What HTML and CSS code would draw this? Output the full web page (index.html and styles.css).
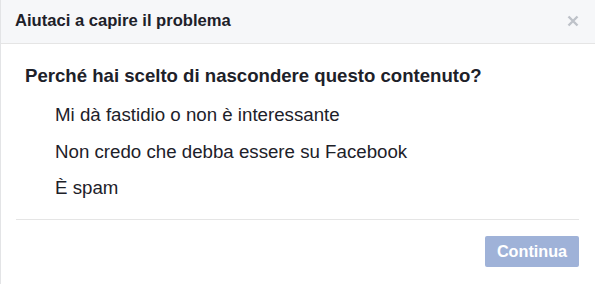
FILE: index.html
```html
<!DOCTYPE html>
<html lang="it">
<head>
    <meta charset="UTF-8">
    <meta name="viewport" content="width=device-width, initial-scale=1.0">
    <title>Aiutaci a capire il problema</title>
    <link rel="stylesheet" href="styles.css">
</head>
<body>
    <div class="dialog">
        <div class="dialog-header">
            <h2 class="dialog-title">Aiutaci a capire il problema</h2>
            <button class="close-button" aria-label="Chiudi">
                <svg width="12" height="12" viewBox="0 0 12 12">
                    <path d="M1.5 1.5 L10.5 10.5 M10.5 1.5 L1.5 10.5" stroke="#bec2c9" stroke-width="2.4" stroke-linecap="butt"/>
                </svg>
            </button>
        </div>

        <div class="dialog-body">
            <div class="question">Perché hai scelto di nascondere questo contenuto?</div>
            <ul class="options">
                <li>Mi dà fastidio o non è interessante</li>
                <li>Non credo che debba essere su Facebook</li>
                <li>È spam</li>
            </ul>
        </div>

        <div class="dialog-footer">
            <button class="btn-primary" disabled>Continua</button>
        </div>
    </div>
</body>
</html>
```

FILE: styles.css
```css
body {
    font-family: 'Liberation Sans', Arial, Helvetica, sans-serif;
    margin: 0;
    background-color: #ffffff;
    color: #1d2129;
}

.dialog {
    height: 284px;
    box-sizing: border-box;
    border-left: 1px solid #e3e4e6;
    background-color: #ffffff;
}

.dialog-header {
    display: flex;
    justify-content: space-between;
    align-items: flex-start;
    height: 44px;
    box-sizing: border-box;
    padding: 11px 16px 0 14px;
    background-color: #f6f7f9;
    border-bottom: 1px solid #e5e5e5;
}

.dialog-title {
    margin: 0;
    font-size: 16.6px;
    line-height: 20px;
    font-weight: bold;
    color: #1d2129;
}

.close-button {
    background: none;
    border: none;
    padding: 0;
    margin-top: 4px;
    width: 12px;
    height: 12px;
    cursor: pointer;
}

.close-button svg {
    display: block;
}

.dialog-body {
    padding: 21px 16px 0 16px;
}

.question {
    margin-left: 8px;
    font-size: 18.6px;
    line-height: 22px;
    font-weight: bold;
}

.options {
    list-style: none;
    margin: 17px 0 0 0;
    padding: 0 0 0 38px;
    display: flex;
    flex-direction: column;
    gap: 14.5px;
}

.options li {
    font-size: 18.7px;
    line-height: 22px;
    color: #1d2129;
    cursor: pointer;
}

.dialog-footer {
    display: flex;
    justify-content: flex-end;
    margin: 20px 16px 0 15px;
    padding-top: 16px;
    border-top: 1px solid #e5e5e5;
}

.btn-primary {
    width: 94px;
    height: 31px;
    padding: 0;
    border: none;
    border-radius: 2px;
    background-color: #9fb2d8;
    color: #ffffff;
    font-family: 'Liberation Sans', Arial, Helvetica, sans-serif;
    font-size: 16.2px;
    font-weight: bold;
}
```
